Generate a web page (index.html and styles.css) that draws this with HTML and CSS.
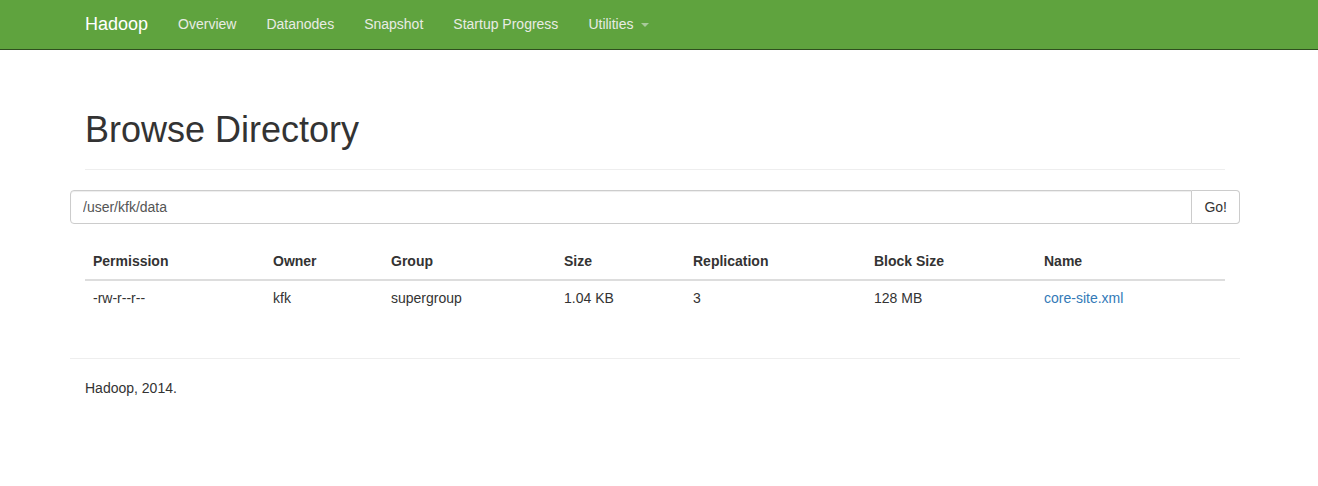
FILE: index.html
```html
<!DOCTYPE html>
<html>
<head>
<meta charset="utf-8">
<title>Browsing HDFS</title>
<link rel="stylesheet" href="styles.css">
</head>
<body>
<header class="navbar">
  <div class="container nav-inner">
    <a class="brand" href="#">Hadoop</a>
    <ul class="nav">
      <li><a href="#">Overview</a></li>
      <li><a href="#">Datanodes</a></li>
      <li><a href="#">Snapshot</a></li>
      <li><a href="#">Startup Progress</a></li>
      <li><a href="#">Utilities <span class="caret"></span></a></li>
    </ul>
  </div>
</header>
<main class="container">
  <div class="page-header"><h1>Browse Directory</h1></div>
  <div class="row">
    <form class="input-group">
      <input type="text" class="form-control" value="/user/kfk/data">
      <button class="btn" type="button">Go!</button>
    </form>
  </div>
  <div class="spacer"></div>
  <table class="table">
    <colgroup>
      <col class="c-perm"><col class="c-owner"><col class="c-group"><col class="c-size"><col class="c-repl"><col class="c-block"><col class="c-name">
    </colgroup>
    <thead>
      <tr><th>Permission</th><th>Owner</th><th>Group</th><th>Size</th><th>Replication</th><th>Block Size</th><th>Name</th></tr>
    </thead>
    <tbody>
      <tr><td>-rw-r--r--</td><td>kfk</td><td>supergroup</td><td>1.04 KB</td><td>3</td><td>128 MB</td><td><a href="#">core-site.xml</a></td></tr>
    </tbody>
  </table>
  <div class="row footer">
    <hr>
    <p>Hadoop, 2014.</p>
  </div>
</main>
</body>
</html>
```
FILE: styles.css
```css
* { box-sizing: border-box; }
html, body { margin: 0; padding: 0; }
body {
  font-family: "Liberation Sans", Arial, Helvetica, sans-serif;
  font-size: 14px;
  line-height: 20px;
  color: #333;
  background: #fff;
}
a { color: #337ab7; text-decoration: none; }
.container {
  width: 1170px;
  margin-left: calc((100% - 1178px) / 2);
  margin-right: auto;
  padding: 0 15px;
}
.navbar {
  height: 50px;
  background: #5fa33e;
  border-bottom: 1px solid #2f4f1f;
}
.nav-inner {
  display: flex;
  align-items: center;
  height: 49px;
  padding-bottom: 1px;
}
.brand {
  color: #fff;
  font-size: 18px;
  line-height: 20px;
  padding-right: 15px;
}
.nav {
  list-style: none;
  margin: 0;
  padding: 0;
  display: flex;
}
.nav a {
  display: block;
  padding: 0 15px;
  color: #e8ece4;
  line-height: 20px;
}
.caret {
  display: inline-block;
  width: 0;
  height: 0;
  margin-left: 4px;
  vertical-align: middle;
  border-top: 4px solid #a8c99a;
  border-left: 4px solid transparent;
  border-right: 4px solid transparent;
}
.page-header {
  margin: 60px 0 20px;
  padding-bottom: 9px;
  border-bottom: 1px solid #eee;
}
h1 {
  margin: 0 0 10px;
  font-size: 36px;
  font-weight: 500;
  line-height: 1.1;
}
.row { margin: 0 -15px; }
.input-group {
  display: flex;
  margin: 0;
}
.form-control {
  flex: 1;
  height: 34px;
  padding: 6px 12px;
  font-family: inherit;
  font-size: 14px;
  color: #555;
  border: 1px solid #ccc;
  border-radius: 4px 0 0 4px;
  box-shadow: inset 0 1px 1px rgba(0,0,0,.075);
  outline: none;
}
.btn {
  height: 34px;
  padding: 6px 12px;
  font-family: inherit;
  font-size: 14px;
  color: #333;
  background: #fff;
  border: 1px solid #ccc;
  border-left: 0;
  border-radius: 0 4px 4px 0;
}
.spacer { height: 19px; }
.table {
  width: 100%;
  border-collapse: collapse;
  border-spacing: 0;
  margin-bottom: 20px;
  table-layout: fixed;
}
.table th, .table td {
  padding: 8px;
  text-align: left;
  line-height: 20px;
  vertical-align: top;
}
.table th {
  font-weight: bold;
  border-bottom: 2px solid #ddd;
}
.table td { border-top: 1px solid #ddd; padding-top: 7px; }
.c-perm { width: 180px; }
.c-owner { width: 118px; }
.c-group { width: 173px; }
.c-size { width: 129px; }
.c-repl { width: 181px; }
.c-block { width: 170px; }
.c-name { width: 189px; }
.footer hr {
  margin: 42px 0 19px;
  border: 0;
  border-top: 1px solid #eee;
}
.footer p {
  margin: 0 0 10px;
  padding: 0 15px;
}
```
